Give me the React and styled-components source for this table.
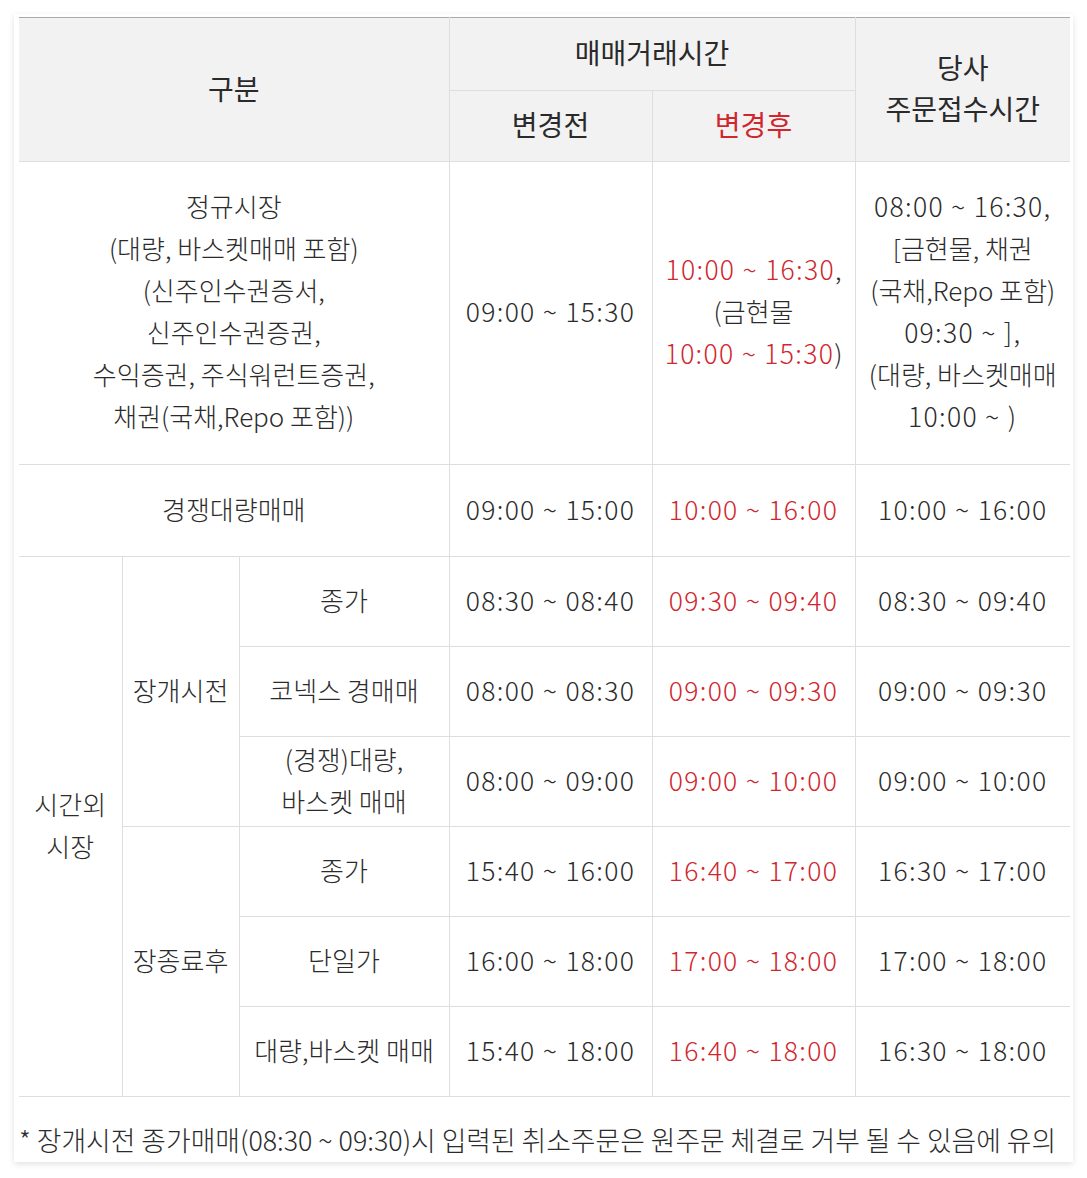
import styled, { createGlobalStyle } from "styled-components";

const GlobalStyle = createGlobalStyle`
  html, body {
    margin: 0;
    padding: 0;
    background: #fff;
  }
  body {
    font-family: "Noto Sans CJK KR", "Noto Sans", sans-serif;
    color: #333;
  }
`;

const Page = styled.div`
  padding: 14px;
  width: 1059px;
`;

const Card = styled.div`
  background: #fff;
  box-shadow: 0 2px 6px rgba(0, 0, 0, 0.12);
  padding: 3px 3px 0 5px;
  overflow: hidden;
`;

const Table = styled.table`
  width: 1051px;
  border-collapse: collapse;
  table-layout: fixed;
  border-top: 1px solid #a9a9a9;
  border-bottom: 1px solid #a9a9a9;
`;

const Th = styled.th`
  background: #f2f2f2;
  border: 1px solid #dedede;
  border-top: none;
  font-size: 28px;
  font-weight: 400;
  color: ${(p) => (p.red ? "#d0262d" : "#2a2a2a")};
  line-height: 41px;
  height: ${(p) => (p.h || 70) - 3}px;
  padding: 0 0 3px 0;
  &:first-child {
    border-left: none;
  }
  &:last-child {
    border-right: none;
  }
`;

const Td = styled.td`
  border: 1px solid #dedede;
  font-size: 26px;
  font-weight: 300;
  line-height: 42px;
  text-align: center;
  color: #2b2b2b;
  height: ${(p) => (p.h || 89) - 4}px;
  padding: 0 0 4px 0;
  white-space: nowrap;
  &.first {
    border-left: none;
  }
  &:last-child {
    border-right: none;
  }
`;

const Time = styled.span`
  font-size: 26.5px;
  letter-spacing: 1.3px;
  color: ${(p) => (p.red ? "#d0262d" : "#2b2b2b")};
`;

const Note = styled.p`
  margin: 0;
  padding: 24px 0 3px 0;
  font-size: 26.8px;
  font-weight: 300;
  line-height: 38px;
  white-space: nowrap;
  color: #2b2b2b;
`;

export default function App() {
  return (
    <Page>
      <GlobalStyle />
      <Card>
        <Table>
          <colgroup>
            <col style={{ width: 103 }} />
            <col style={{ width: 117 }} />
            <col style={{ width: 210 }} />
            <col style={{ width: 203 }} />
            <col style={{ width: 203 }} />
            <col style={{ width: 215 }} />
          </colgroup>
          <thead>
            <tr>
              <Th colSpan={3} rowSpan={2}>
                구분
              </Th>
              <Th colSpan={2} h={72}>
                매매거래시간
              </Th>
              <Th rowSpan={2}>
                당사
                <br />
                주문접수시간
              </Th>
            </tr>
            <tr>
              <Th h={70}>변경전</Th>
              <Th h={70} red>
                변경후
              </Th>
            </tr>
          </thead>
          <tbody>
            <tr>
              <Td colSpan={3} className="first" h={302}>
                정규시장
                <br />
                (대량, 바스켓매매 포함)
                <br />
                (신주인수권증서,
                <br />
                신주인수권증권,
                <br />
                수익증권, 주식워런트증권,
                <br />
                채권(국채,Repo 포함))
              </Td>
              <Td>
                <Time>09:00 ~ 15:30</Time>
              </Td>
              <Td>
                <Time red>10:00 ~ 16:30</Time>,
                <br />
                (금현물
                <br />
                <Time red>10:00 ~ 15:30</Time>)
              </Td>
              <Td>
                <Time>08:00 ~ 16:30,</Time>
                <br />
                [금현물, 채권
                <br />
                (국채,Repo 포함)
                <br />
                <Time>09:30 ~ ],</Time>
                <br />
                (대량, 바스켓매매
                <br />
                <Time>10:00 ~ )</Time>
              </Td>
            </tr>
            <tr>
              <Td colSpan={3} className="first" h={91}>
                경쟁대량매매
              </Td>
              <Td>
                <Time>09:00 ~ 15:00</Time>
              </Td>
              <Td>
                <Time red>10:00 ~ 16:00</Time>
              </Td>
              <Td>
                <Time>10:00 ~ 16:00</Time>
              </Td>
            </tr>
            <tr>
              <Td rowSpan={6} className="first">
                시간외
                <br />
                시장
              </Td>
              <Td rowSpan={3}>장개시전</Td>
              <Td>종가</Td>
              <Td>
                <Time>08:30 ~ 08:40</Time>
              </Td>
              <Td>
                <Time red>09:30 ~ 09:40</Time>
              </Td>
              <Td>
                <Time>08:30 ~ 09:40</Time>
              </Td>
            </tr>
            <tr>
              <Td>코넥스 경매매</Td>
              <Td>
                <Time>08:00 ~ 08:30</Time>
              </Td>
              <Td>
                <Time red>09:00 ~ 09:30</Time>
              </Td>
              <Td>
                <Time>09:00 ~ 09:30</Time>
              </Td>
            </tr>
            <tr>
              <Td>
                (경쟁)대량,
                <br />
                바스켓 매매
              </Td>
              <Td>
                <Time>08:00 ~ 09:00</Time>
              </Td>
              <Td>
                <Time red>09:00 ~ 10:00</Time>
              </Td>
              <Td>
                <Time>09:00 ~ 10:00</Time>
              </Td>
            </tr>
            <tr>
              <Td rowSpan={3}>장종료후</Td>
              <Td>종가</Td>
              <Td>
                <Time>15:40 ~ 16:00</Time>
              </Td>
              <Td>
                <Time red>16:40 ~ 17:00</Time>
              </Td>
              <Td>
                <Time>16:30 ~ 17:00</Time>
              </Td>
            </tr>
            <tr>
              <Td>단일가</Td>
              <Td>
                <Time>16:00 ~ 18:00</Time>
              </Td>
              <Td>
                <Time red>17:00 ~ 18:00</Time>
              </Td>
              <Td>
                <Time>17:00 ~ 18:00</Time>
              </Td>
            </tr>
            <tr>
              <Td>대량,바스켓 매매</Td>
              <Td>
                <Time>15:40 ~ 18:00</Time>
              </Td>
              <Td>
                <Time red>16:40 ~ 18:00</Time>
              </Td>
              <Td>
                <Time>16:30 ~ 18:00</Time>
              </Td>
            </tr>
          </tbody>
        </Table>
        <Note>
          * 장개시전 종가매매(08:30 ~ 09:30)시 입력된 취소주문은 원주문 체결로 거부 될 수 있음에 유의
        </Note>
      </Card>
    </Page>
  );
}
